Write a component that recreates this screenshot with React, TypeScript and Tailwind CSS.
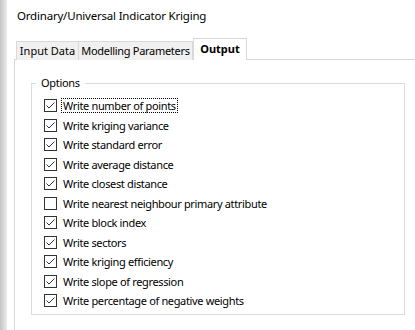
import React from 'react';

const options: { label: string; checked: boolean }[] = [
  { label: 'Write number of points', checked: true },
  { label: 'Write kriging variance', checked: true },
  { label: 'Write standard error', checked: true },
  { label: 'Write average distance', checked: true },
  { label: 'Write closest distance', checked: true },
  { label: 'Write nearest neighbour primary attribute', checked: false },
  { label: 'Write block index', checked: true },
  { label: 'Write sectors', checked: true },
  { label: 'Write kriging efficiency', checked: true },
  { label: 'Write slope of regression', checked: true },
  { label: 'Write percentage of negative weights', checked: true },
];

const CheckBox = ({ checked }: { checked: boolean }) => (
  <span className="w-[13px] h-[13px] border border-[#333333] bg-white flex items-center justify-center shrink-0">
    {checked && (
      <svg width="11" height="11" viewBox="0 0 11 11">
        <polyline points="1.5,5.5 4,8 9.5,2.5" fill="none" stroke="#333333" strokeWidth="1" />
      </svg>
    )}
  </span>
);

export default function App() {
  return (
    <div
      className="w-[415px] h-[330px] flex bg-white overflow-hidden text-black text-[11px]"
      style={{ fontFamily: '"Noto Sans", "Liberation Sans", sans-serif' }}
    >
      <div className="w-[7px] shrink-0 bg-gradient-to-r from-[#c4c4c4] to-[#ececec]" />
      <div className="flex-1 flex flex-col pl-[7px]">
        <div className="h-[38px] pl-[3px] pt-[8px] leading-[16px] text-[11.5px] tracking-[-0.2px]">Ordinary/Universal Indicator Kriging</div>

        <div className="flex items-end h-[22px] pl-[2px] relative z-10 whitespace-nowrap">
          <div className="w-[63px] h-[19px] bg-[#f0f0f0] border border-b-0 border-[#d9d9d9] leading-[18px] text-center">Input Data</div>
          <div className="w-[114px] h-[19px] bg-[#f0f0f0] border border-l-0 border-b-0 border-[#d9d9d9] leading-[18px] text-center tracking-[-0.3px]">Modelling Parameters</div>
          <div className="w-[54px] h-[22px] bg-white border border-b-0 border-[#d9d9d9] font-bold leading-[19px] text-center">Output</div>
        </div>

        <div className="flex-1 border-l border-t border-[#d9d9d9] -mt-px pl-[16px] pr-[10px] pt-[16px]">
          <fieldset className="border border-[#dcdcdc] h-[239px] px-[4px]">
            <legend className="px-[5px] leading-[14px] tracking-[-0.3px]">Options</legend>
            <div className="flex flex-col pl-[8px] pt-[6px]">
              {options.map((o, i) => (
                <div key={i} className="h-[19.5px] flex items-center gap-[4px]">
                  <CheckBox checked={o.checked} />
                  <span
                    className={`px-[1px] leading-[13px] border border-dotted whitespace-nowrap tracking-[-0.35px] ${
                      i === 0 ? 'border-black' : 'border-transparent'
                    }`}
                  >
                    {o.label}
                  </span>
                </div>
              ))}
            </div>
          </fieldset>
        </div>
      </div>
    </div>
  );
}
